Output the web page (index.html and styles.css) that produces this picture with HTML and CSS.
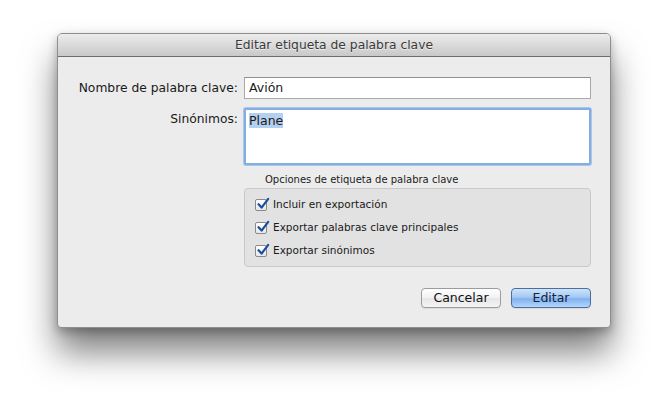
FILE: index.html
```html
<!DOCTYPE html>
<html lang="es">
<head>
<meta charset="utf-8">
<title>Editar etiqueta de palabra clave</title>
<link rel="stylesheet" href="styles.css">
</head>
<body>
<div class="window">
  <div class="titlebar">Editar etiqueta de palabra clave</div>
  <div class="content">
    <div class="form">
      <label class="label">Nombre de palabra clave:</label>
      <div class="field">Avión</div>
      <label class="label syn-label">Sinónimos:</label>
      <div class="field area"><span class="sel">Plane</span></div>
      <div class="spacer"></div>
      <div class="group-wrap">
        <div class="group-title">Opciones de etiqueta de palabra clave</div>
        <div class="group">
          <div class="check-row"><span class="cb"><svg viewBox="0 0 14 14" width="14" height="14"><path d="M2.5 7.2 L5.6 10.6 L12.2 1.8" fill="none" stroke="#1b4f9c" stroke-width="2.2" stroke-linecap="round" stroke-linejoin="round"/></svg></span>Incluir en exportación</div>
          <div class="check-row"><span class="cb"><svg viewBox="0 0 14 14" width="14" height="14"><path d="M2.5 7.2 L5.6 10.6 L12.2 1.8" fill="none" stroke="#1b4f9c" stroke-width="2.2" stroke-linecap="round" stroke-linejoin="round"/></svg></span>Exportar palabras clave principales</div>
          <div class="check-row"><span class="cb"><svg viewBox="0 0 14 14" width="14" height="14"><path d="M2.5 7.2 L5.6 10.6 L12.2 1.8" fill="none" stroke="#1b4f9c" stroke-width="2.2" stroke-linecap="round" stroke-linejoin="round"/></svg></span>Exportar sinónimos</div>
        </div>
      </div>
    </div>
    <div class="buttons">
      <div class="btn">Cancelar</div>
      <div class="btn primary">Editar</div>
    </div>
  </div>
</div>
</body>
</html>
```

FILE: styles.css
```css
html, body {
  margin: 0;
  padding: 0;
  background: #ffffff;
}
html {
  min-height: 407px;
}
body {
  font-family: "DejaVu Sans", "Liberation Sans", sans-serif;
  color: #1a1a1a;
  padding: 33px 0 0 57px;
  min-height: 407px;
  box-sizing: border-box;
}
.window {
  width: 554px;
  height: 295px;
  box-sizing: border-box;
  background: #ececec;
  border: 1px solid #8e8e8e;
  border-radius: 5px 5px 4px 4px;
  box-shadow: 0 24px 34px rgba(0,0,0,0.5), 0 4px 10px rgba(0,0,0,0.25);
  overflow: hidden;
}
.titlebar {
  height: 22px;
  line-height: 22px;
  text-align: center;
  font-size: 12.3px;
  color: #3a3a3a;
  background: linear-gradient(#ececec, #d9d9d9 55%, #c8c8c8);
  border-bottom: 1px solid #6d6d6d;
  text-shadow: 0 1px 0 rgba(255,255,255,0.6);
}
.content {
  padding: 20px 19px 0 0;
}
.form {
  display: grid;
  grid-template-columns: 180px 347px;
  column-gap: 6px;
  row-gap: 9px;
  align-items: start;
}
.label {
  text-align: right;
  font-size: 12.3px;
  line-height: 22px;
  color: #1a1a1a;
}
.field {
  height: 22px;
  box-sizing: border-box;
  background: #fff;
  border: 1px solid #a9a9a9;
  border-top-color: #8f8f8f;
  font-size: 12.5px;
  line-height: 20px;
  padding: 0 4px;
}
.area {
  height: 57px;
  border: 2px solid #86ade0;
  box-shadow: 0 0 0 1px #a8c6ee;
  border-radius: 2px;
  padding: 1px 3px;
  line-height: 19px;
}
.sel {
  background: #b4d0f0;
}
.group-title {
  font-size: 10px;
  line-height: 12px;
  padding-left: 21px;
  color: #222;
  margin-bottom: 2px;
}
.group {
  height: 79px;
  box-sizing: border-box;
  border: 1px solid #c9c9c9;
  border-radius: 4px;
  background: #e2e2e2;
  padding: 8px 0 0 10px;
  display: flex;
  flex-direction: column;
  gap: 8px;
}
.check-row {
  display: flex;
  align-items: center;
  font-size: 10.5px;
  line-height: 15px;
  height: 15px;
  color: #1a1a1a;
}
.cb {
  width: 12px;
  height: 12px;
  box-sizing: border-box;
  border: 1px solid #8a8a8a;
  border-radius: 2px;
  background: linear-gradient(#ffffff, #e8e8e8);
  margin-right: 6px;
  position: relative;
  flex: none;
}
.cb svg {
  position: absolute;
  left: 0px;
  top: -3px;
}
.buttons {
  display: flex;
  justify-content: flex-end;
  gap: 10px;
  margin-top: 21px;
}
.btn {
  width: 80px;
  height: 20px;
  box-sizing: border-box;
  border: 1px solid #9c9c9c;
  border-radius: 4px;
  background: linear-gradient(#ffffff, #f1f1f1 50%, #e6e6e6 51%, #f4f4f4);
  font-size: 12.5px;
  line-height: 18px;
  text-align: center;
  color: #111;
  box-shadow: 0 1px 1px rgba(0,0,0,0.08);
}
.primary {
  border-color: #4a6f9e;
  background: linear-gradient(#cfe3fb, #a4c9f4 45%, #7fb1ef 55%, #b6d6fb);
  color: #14243c;
}
```
